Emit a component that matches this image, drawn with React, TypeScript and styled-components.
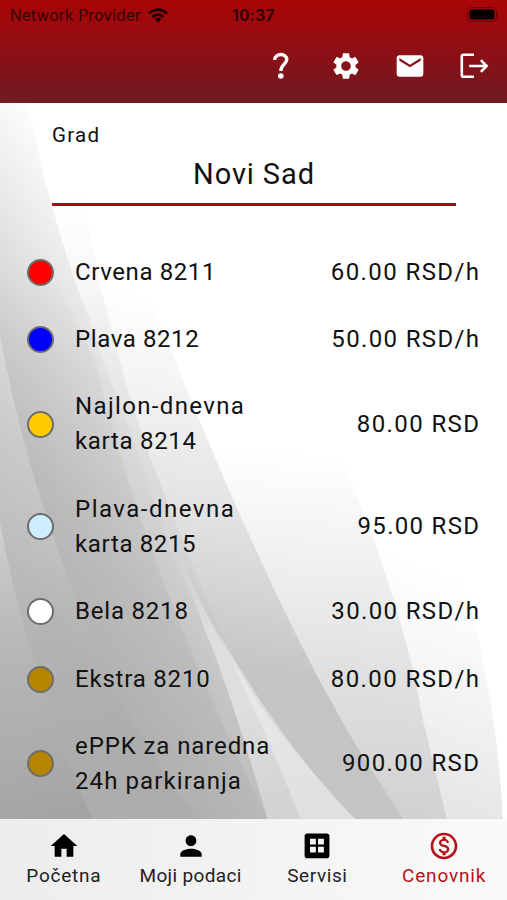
import React from 'react';
import styled, { createGlobalStyle } from 'styled-components';
import { MdSettings, MdEmail, MdHome, MdPerson, MdOutlineMonetizationOn } from 'react-icons/md';

const GlobalStyle = createGlobalStyle`
  * { box-sizing: border-box; }
  body { margin: 0; background: #fff; }
`;

const Screen = styled.div`
  position: relative;
  width: 507px;
  height: 900px;
  overflow: hidden;
  display: flex;
  flex-direction: column;
  font-family: Roboto, sans-serif;
  color: #111;
`;

const Backdrop = styled.svg`
  position: absolute;
  inset: 0;
  z-index: -1;
`;

const Header = styled.header`
  height: 103px;
  flex: none;
  background: linear-gradient(#a90606 0, #a30709 12px, #711a22 101px, #6f1c24);
`;

const StatusBar = styled.div`
  height: 30px;
  padding: 0 8px 0 10px;
  display: grid;
  grid-template-columns: 1fr auto 1fr;
  align-items: center;
  font-family: Inter, sans-serif;
  font-size: 15.5px;
  color: #310000;
`;

const Carrier = styled.div`
  display: flex;
  align-items: center;
  gap: 7px;
  letter-spacing: 0.2px;
`;

const Clock = styled.div`
  margin-left: -2px;
  font-weight: 600;
  color: #260000;
  letter-spacing: 0.4px;
`;

const Battery = styled.svg`
  justify-self: end;
`;

const Toolbar = styled.nav`
  height: 72px;
  padding: 0 17px 0 0;
  display: flex;
  justify-content: flex-end;
  align-items: center;
  gap: 32px;
  color: #fff;
  svg { display: block; width: 32px; height: 32px; }
`;

const Content = styled.main`
  flex: 1;
  min-height: 0;
`;

const CityField = styled.div`
  margin: 0 51px 0 52px;
  height: 103px;
  border-bottom: 3px solid #a50c12;
`;

const FieldLabel = styled.div`
  padding-top: 18px;
  font-size: 20.5px;
  line-height: 28px;
  letter-spacing: 1.3px;
`;

const FieldValue = styled.div`
  padding-top: 7px;
  font-size: 29px;
  line-height: 36px;
  text-align: center;
  letter-spacing: 0.9px;
`;

const PriceList = styled.ul`
  list-style: none;
  margin: 0;
  padding: 32.6px 28px 0 27px;
`;

const PriceRow = styled.li`
  display: flex;
  align-items: center;
  padding: 16px 0 16.4px;
`;

const ZoneDot = styled.span<{ $color: string }>`
  width: 27px;
  height: 27px;
  flex: none;
  border: 2.5px solid #6d6d6d;
  border-radius: 50%;
  background: ${(p) => p.$color};
`;

const ZoneName = styled.div`
  margin-left: 21px;
  flex: 1;
  font-size: 24px;
  line-height: 35px;
`;

const Line = styled.div<{ $track: number }>`
  letter-spacing: ${(p) => p.$track}px;
  white-space: nowrap;
`;

const Price = styled.div<{ $track: number }>`
  font-size: 24px;
  line-height: 35px;
  letter-spacing: ${(p) => p.$track}px;
  margin-right: ${(p) => -p.$track}px;
  white-space: nowrap;
`;

const TabBar = styled.nav`
  height: 81px;
  flex: none;
  display: grid;
  grid-template-columns: repeat(4, 1fr);
  background: linear-gradient(90deg, #ededed, #f3f3f3 50%, #fafafa);
`;

const Tab = styled.div<{ $active?: boolean; $track: number }>`
  display: flex;
  flex-direction: column;
  align-items: center;
  gap: 1px;
  padding: 11px 0 0 1px;
  font-size: 19px;
  line-height: 26px;
  white-space: nowrap;
  letter-spacing: ${(p) => p.$track}px;
  color: ${(p) => (p.$active ? '#b51218' : '#222')};
  svg { display: block; width: 32px; height: 32px; color: ${(p) => (p.$active ? '#b51218' : '#000')}; }
`;

const zones = [
  { color: '#ff0000', name: [['Crvena 8211', 0.6]], price: '60.00 RSD/h', track: 1.4 },
  { color: '#0000ff', name: [['Plava 8212', 0.6]], price: '50.00 RSD/h', track: 1.35 },
  { color: '#ffcb00', name: [['Najlon-dnevna', 1.35], ['karta 8214', 0.7]], price: '80.00 RSD', track: 1.4 },
  { color: '#cdeeff', name: [['Plava-dnevna', 1.5], ['karta 8215', 0.65]], price: '95.00 RSD', track: 1.3 },
  { color: '#ffffff', name: [['Bela 8218', 0.8]], price: '30.00 RSD/h', track: 1.35 },
  { color: '#b58500', name: [['Ekstra 8210', 0.8]], price: '80.00 RSD/h', track: 1.4 },
  { color: '#b58500', name: [['ePPK za naredna', 0.9], ['24h parkiranja', 1.1]], price: '900.00 RSD', track: 1.4 },
] as { color: string; name: [string, number][]; price: string; track: number }[];

type Stop = [number, string, number?];
const Fade = ({ id, x1, y1, x2, y2, stops }: { id: string; x1: number; y1: number; x2: number; y2: number; stops: Stop[] }) => (
  <linearGradient id={id} gradientUnits="userSpaceOnUse" x1={x1} y1={y1} x2={x2} y2={y2}>
    {stops.map(([o, c, a]) => <stop key={o} offset={o} stopColor={c} stopOpacity={a ?? 1} />)}
  </linearGradient>
);

const Waves = () => (
  <Backdrop width="507" height="900" viewBox="0 0 507 900">
    <defs>
      <Fade id="outer" x1={490} y1={590} x2={400} y2={820} stops={[[0, '#fff'], [0.4, '#f5f5f5'], [1, '#e2e2e2']]} />
      <Fade id="broad" x1={350} y1={455} x2={320} y2={820} stops={[[0, '#fff'], [0.3, '#f0f0f0'], [0.6, '#e0e0e0'], [1, '#d0d0d0']]} />
      <Fade id="middle" x1={185} y1={300} x2={125} y2={650} stops={[[0, '#fff'], [0.28, '#f2f2f2'], [0.59, '#e2e2e2'], [0.8, '#d3d3d3'], [1, '#c4c4c4']]} />
      <Fade id="ribbon" x1={80} y1={190} x2={180} y2={600} stops={[[0, '#999', 0], [0.3, '#999', 0.1], [0.7, '#999', 0.15], [1, '#999', 0.08]]} />
      <Fade id="wedge" x1={185} y1={550} x2={250} y2={820} stops={[[0, '#ddd', 0], [0.3, '#dedede'], [0.6, '#dedede'], [1, '#d2d2d2']]} />
      <Fade id="glint" x1={190} y1={580} x2={280} y2={820} stops={[[0, '#eee', 0], [0.4, '#eee', 0.6], [1, '#eee', 0.5]]} />
      <Fade id="left" x1={60} y1={110} x2={-190} y2={298} stops={[[0.05, '#fff'], [0.15, '#f7f7f7'], [0.35, '#e5e5e5'], [0.5, '#d6d6d6'], [0.6, '#cdcdcd'], [0.74, '#c2c2c2'], [1, '#b6b6b6']]} />
      <Fade id="shadow" x1={30} y1={340} x2={100} y2={800} stops={[[0, '#777', 0.05], [0.3, '#777', 0.1], [1, '#777', 0.14]]} />
      <Fade id="upper" x1={0} y1={270} x2={50} y2={530} stops={[[0, '#777', 0], [0.4, '#777', 0.12], [1, '#777', 0.17]]} />
      <Fade id="inner" x1={20} y1={335} x2={80} y2={820} stops={[[0, '#fff', 0.3], [0.45, '#fff', 0.15], [1, '#888', 0.02]]} />
      <Fade id="innerLow" x1={0} y1={540} x2={60} y2={820} stops={[[0, '#eaeaea', 0.35], [0.45, '#ccc', 0.12], [1, '#888', 0.25]]} />
    </defs>
    <path fill="#fff" d="M0 0H507V900H0z" />
    <path fill="url(#outer)" d="M430 480Q495 650 503 820L506 900H0V480z" />
    <path fill="url(#broad)" d="M330 430Q400 590 423 720L447 820L462 900H0V430z" />
    <path fill="url(#middle)" d="M90 270L140 270Q205 440 256 550Q310 670 365 760L404 820L460 900H0V270z" />
    <path fill="url(#ribbon)" d="M82 190Q108 345 155 470Q185 550 237 670L190 700L0 400V190z" />
    <path fill="url(#wedge)" d="M165 520Q205 625 270 720Q315 778 356 820L425 900H150z" />
    <path fill="url(#glint)" d="M180 560Q250 690 301 820H356Q262 725 180 560z" />
    <path fill="url(#left)" d="M28 103Q55 235 90 320Q105 370 130 430Q150 490 170 550Q185 575 205 630Q230 690 268 820L285 900H0V103z" />
    <path fill="url(#shadow)" d="M0 335Q20 440 48 520C82 625 125 725 198 820V900H0z" />
    <path fill="url(#inner)" d="M0 335Q20 440 48 520C82 625 125 725 198 820V900H0z" />
    <path fill="url(#upper)" d="M0 270L50 270L95 360Q140 560 268 820H198C125 725 82 625 48 520Q20 440 0 335z" opacity=".5" />
    <path fill="url(#innerLow)" d="M0 522Q25 660 92 820V900H0z" />
  </Backdrop>
);

const WifiIcon = () => (
  <svg width="20" height="15" viewBox="0 0 20 15" fill="none" stroke="#180000" strokeWidth="2.6">
    <path d="M1 5.3Q10-2.2 19 5.3M4.3 9Q10 4.2 15.7 9" />
    <path d="M6.6 11Q10 8.4 13.4 11L10 14.6z" fill="#180000" stroke="none" />
  </svg>
);

const BatteryIcon = () => (
  <Battery width="34" height="16" viewBox="0 0 34 16">
    <rect x="2.5" y="0.5" width="29" height="14" rx="4" fill="none" stroke="#6c0000" strokeWidth="1" />
    <rect x="4.5" y="2.5" width="25" height="10" rx="2.4" fill="#000" />
    <path d="M32.5 5.5Q34.5 7.5 32.5 9.5z" fill="#6c0000" />
  </Battery>
);

const HelpIcon = () => (
  <svg viewBox="0 0 32 32" fill="none" stroke="#fff" strokeWidth="3.4" strokeLinecap="butt">
    <path d="M8.6 9.9C9.2 2.7 20.8 2.9 20.8 9.6C20.8 13.9 14.8 14.8 14.8 21" />
    <circle cx="14.8" cy="26" r="2.8" fill="#fff" stroke="none" />
  </svg>
);

const LogoutIcon = () => (
  <svg viewBox="0 0 32 32" fill="none" stroke="#fff" strokeWidth="2.6">
    <path d="M16 4.8H5.6Q3.8 4.8 3.8 6.6V25Q3.8 26.8 5.6 26.8H16M11.2 16H28M22.9 10.2L28.6 16L22.9 21.8" />
  </svg>
);

const GridIcon = () => (
  <svg viewBox="0 0 32 32" fill="currentColor">
    <path fillRule="evenodd" d="M6.4 3.4H25.6Q28.4 3.4 28.4 6.2V25.4Q28.4 28.2 25.6 28.2H6.4Q3.6 28.2 3.6 25.4V6.2Q3.6 3.4 6.4 3.4zM9 8.8V14.6H14.9V8.8zM17 8.8V14.6H22.9V8.8zM9 16.8V22.6H14.9V16.8zM17 16.8V22.6H22.9V16.8z" />
  </svg>
);

export default function App() {
  return (
    <Screen>
      <GlobalStyle />
      <Waves />
      <Header>
        <StatusBar>
          <Carrier>Network Provider <WifiIcon /></Carrier>
          <Clock>10:37</Clock>
          <BatteryIcon />
        </StatusBar>
        <Toolbar>
          <HelpIcon />
          <MdSettings />
          <MdEmail />
          <LogoutIcon />
        </Toolbar>
      </Header>
      <Content>
        <CityField>
          <FieldLabel>Grad</FieldLabel>
          <FieldValue>Novi Sad</FieldValue>
        </CityField>
        <PriceList>
          {zones.map((z) => (
            <PriceRow key={z.name[0][0]}>
              <ZoneDot $color={z.color} />
              <ZoneName>
                {z.name.map(([text, track]) => <Line key={text} $track={track}>{text}</Line>)}
              </ZoneName>
              <Price $track={z.track}>{z.price}</Price>
            </PriceRow>
          ))}
        </PriceList>
      </Content>
      <TabBar>
        <Tab $track={0.75}><MdHome />Početna</Tab>
        <Tab $track={0.35}><MdPerson />Moji podaci</Tab>
        <Tab $track={0.6}><GridIcon />Servisi</Tab>
        <Tab $track={0.85} $active><MdOutlineMonetizationOn />Cenovnik</Tab>
      </TabBar>
    </Screen>
  );
}
